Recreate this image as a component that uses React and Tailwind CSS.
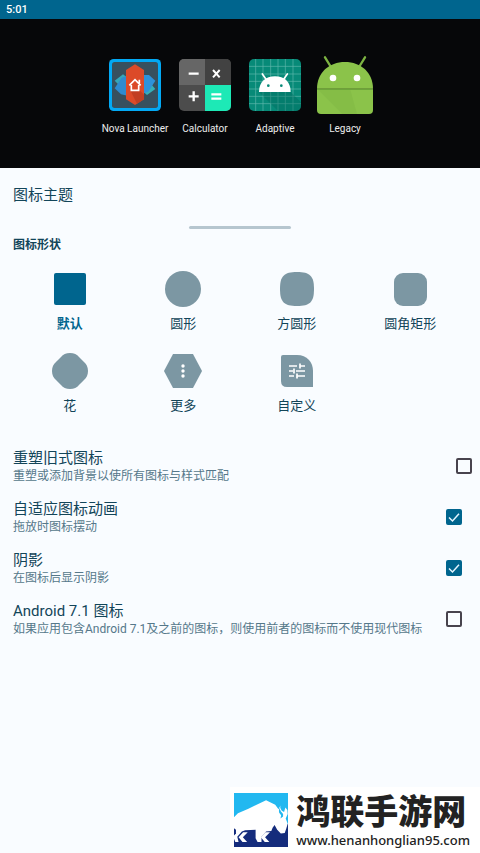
import { useState } from 'react'

const NovaIcon = () => (
  <svg viewBox="0 0 156 156" className="size-[52px]">
    <rect width="156" height="156" rx="14" fill="#03a9f4" />
    <rect x="9" y="9" width="138" height="138" rx="8" fill="#37505e" />
    <path d="M17 65 42 46 58 58 36 84Z" fill="#35a6b8" />
    <path d="M17 88 38 56 56 50V110L36 106Z" fill="#2e8bd0" />
    <path d="M139 90 114 108 100 96 120 68Z" fill="#35b0b8" />
    <path d="M139 65 118 98 100 104V48L120 48Z" fill="#2e92da" />
    <path d="M78 16 105 33V121L78 138 51 121V33Z" fill="#dc4a28" />
    <path d="M92 94 105 107V121L84 134 65 96Z" fill="#c23e22" />
    <path d="M61 79 78 62 95 79M91 62V73M67 78V94H89V78" fill="none" stroke="#fff" strokeWidth="5" />
  </svg>
)

const CalculatorIcon = () => (
  <svg viewBox="0 0 156 156" className="size-[52px] rounded-[5px]">
    <rect width="156" height="156" fill="#4c4c4c" />
    <rect width="78" height="78" fill="#666" />
    <rect x="78" width="78" height="78" fill="#424242" />
    <rect x="78" y="78" width="78" height="78" fill="#1de9b6" />
    <path d="M29 44H59M29 112H59M44 97V127" stroke="#fff" strokeWidth="7" />
    <path d="M102 33 122 55M122 33 102 55" stroke="#fff" strokeWidth="6" />
    <path d="M97 106H127M97 119H127" stroke="#fff" strokeWidth="7" />
  </svg>
)

const AdaptiveIcon = () => (
  <svg viewBox="0 0 156 156" className="size-[52px] rounded-[5px]">
    <rect width="156" height="156" fill="#078a78" />
    <path
      d="M20 0V156M42 0V156M65 0V156M87 0V156M109 0V156M132 0V156M0 22H156M0 45H156M0 67H156M0 90H156M0 112H156M0 134H156"
      stroke="#5fb8ac"
      strokeWidth="2"
    />
    <path d="M30 99H125L156 130V156H87Z" fill="#00695c" opacity=".4" />
    <path d="M30 99C30 69 50 52 78 52S125 69 125 99Z" fill="#fff" />
    <path d="M40 45 52 62M115 45 103 62" stroke="#fff" strokeWidth="5" strokeLinecap="round" />
    <circle cx="58" cy="80" r="4" fill="#078a78" />
    <circle cx="97" cy="80" r="4" fill="#078a78" />
  </svg>
)

const LegacyIcon = () => (
  <svg viewBox="0 0 168 174" className="h-[58px] w-14">
    <path d="M24 4 40 30M144 4 128 30" stroke="#7cb342" strokeWidth="7" strokeLinecap="round" />
    <path d="M0 98C0 50 36 18 84 18S168 50 168 98Z" fill="#8bc34a" />
    <path d="M0 98H168V162Q168 174 156 174H12Q0 174 0 162Z" fill="#8bc34a" />
    <path d="M4 102H100L120 174H76Z" fill="#78ae40" opacity=".3" />
    <path d="M0 100H168" stroke="#689f38" strokeWidth="3" />
    <circle cx="48" cy="66" r="10" fill="#fff" />
    <circle cx="120" cy="66" r="10" fill="#fff" />
  </svg>
)

const apps = [
  { name: 'Nova Launcher', Icon: NovaIcon },
  { name: 'Calculator', Icon: CalculatorIcon },
  { name: 'Adaptive', Icon: AdaptiveIcon },
  { name: 'Legacy', Icon: LegacyIcon },
]

const shapes = [
  { name: '默认', drawing: <rect x="4" y="4" width="32" height="32" rx="2" /> },
  { name: '圆形', drawing: <circle cx="20" cy="20" r="18" /> },
  {
    name: '方圆形',
    drawing: <path d="M20 3C33 3 37 7 37 20S33 37 20 37 3 33 3 20 7 3 20 3Z" />,
  },
  { name: '圆角矩形', drawing: <rect x="4" y="4" width="33" height="33" rx="9" /> },
  {
    name: '花',
    drawing: (
      <path d="M20 2C24 2 27 3.5 29 6Q31.5 8.500 34 11C36.5 13 38 16 38 20S36.5 27 34 29Q31.5 31.500 29 34C27 36.5 24 38 20 38S13 36.5 11 34Q8.500 31.500 6 29C3.500 27 2 24 2 20S3.500 13 6 11Q8.500 8.500 11 6C13 3.500 16 2 20 2Z" />
    ),
  },
  {
    name: '更多',
    drawing: (
      <>
        <path d="M10 3H30L39 20 30 37H10L1 20Z" />
        <g fill="#fff">
          <circle cx="20" cy="15" r="1.7" />
          <circle cx="20" cy="20" r="1.7" />
          <circle cx="20" cy="25" r="1.7" />
        </g>
      </>
    ),
  },
  {
    name: '自定义',
    drawing: (
      <>
        <path d="M6 4H20C30 4 36 11 36 20V36H10Q4 36 4 30V6Q4 4 6 4Z" />
        <path
          d="M12 15H20M23 15H28M23 12.5V17.5M12 20H16M19 20H28M17 17.5V22.5M12 25H17M20 25H28M20 22.5V27.5"
          stroke="#fff"
          strokeWidth="1.7"
        />
      </>
    ),
  },
]

const settings = [
  { id: 'reshape', title: '重塑旧式图标', text: '重塑或添加背景以使所有图标与样式匹配', on: false, pad: 'pr-2' },
  { id: 'animate', title: '自适应图标动画', text: '拖放时图标摆动', on: true, pad: 'pr-[18px]' },
  { id: 'shadow', title: '阴影', text: '在图标后显示阴影', on: true, pad: 'pr-[18px]' },
  {
    id: 'android71',
    title: 'Android 7.1 图标',
    text: '如果应用包含Android 7.1及之前的图标，则使用前者的图标而不使用现代图标',
    on: false,
    pad: 'pr-[18px]',
  },
]

const SettingRow = ({ item }) => {
  const [on, setOn] = useState(item.on)

  return (
    <label htmlFor={item.id} className={`flex items-center justify-between gap-2 pl-[13px] ${item.pad}`}>
      <span className="min-w-0">
        <span className="block text-[15px] leading-5 text-[#124559]">{item.title}</span>
        <span className="block text-xs leading-4 text-[#55788a]">{item.text}</span>
      </span>
      <span className="grid shrink-0 place-items-center">
        <input
          id={item.id}
          type="checkbox"
          checked={on}
          onChange={() => setOn(!on)}
          className="col-start-1 row-start-1 size-4 appearance-none rounded-[2px] border-2 border-[#48434d] checked:border-[#00658e] checked:bg-[#00658e]"
        />
        {on && (
          <svg viewBox="0 0 16 16" className="pointer-events-none col-start-1 row-start-1 size-4">
            <path d="M3 8.5 6.5 12 13 4.8" fill="none" stroke="#e4f5ff" strokeWidth="1.5" />
          </svg>
        )}
      </span>
    </label>
  )
}

const BullLogo = () => (
  <svg viewBox="0 0 165 165" className="size-[54px]">
    <rect width="165" height="165" fill="#22b8f0" />
    <path d="M0 95H165V165H0Z" fill="#152c7c" />
    <path
      d="M0 74 12 62 44 48 98 22 126 36 136 50 142 38Q140 46 146 54L153 58 157 44 163 52 164 64 158 78 164 94 160 108 155 122 143 124 132 112 124 98 118 106 114 116 98 118 84 134V150H72L66 138V112L34 114 24 118 10 134 14 150H4L0 140Z"
      fill="#fff"
    />
    <path d="M0 108 6 112V124L0 130Z" fill="#152c7c" />
    <path d="M42 120H28L14 135 26 150H40L27 135ZM110 120H96L82 135 94 150H108L95 135Z" fill="#fff" />
    <path d="M144 40Q138 48 143 56L150 64V72L142 78 144 68 138 60Q135 50 144 40Z" fill="#22b8f0" />
  </svg>
)

export default function App() {
  const [shape, setShape] = useState('默认')

  return (
    <div className="flex min-h-screen flex-col bg-[#f9fcff] font-['Roboto','Noto_Sans_CJK_SC',sans-serif] text-[#124559]">
      <header className="bg-[#00658e] pl-[6px] text-[11px] leading-[19px] font-medium text-white">5:01</header>

      {/* Preview */}
      <section className="flex h-[149px] justify-center bg-[#060709] pt-9">
        {apps.map(({ name, Icon }) => (
          <div key={name} className="flex w-[70px] flex-col items-center">
            <div className="flex h-[60px] items-center">
              <Icon />
            </div>
            <span className="mt-[6px] text-[10px] leading-4 whitespace-nowrap text-[#ededed]">{name}</span>
          </div>
        ))}
      </section>

      <main>
        <h1 className="px-[13px] pt-[17px] text-[15px] leading-5">图标主题</h1>
        <div className="mx-auto mt-[21px] h-[3px] w-[102px] rounded-full bg-[#b6c6cf]" />
        <h2 className="mt-2 px-[13px] text-xs leading-4 font-bold">图标形状</h2>

        {/* Shapes */}
        <div className="mt-4 grid grid-cols-4 gap-y-[17px] px-[13px]">
          {shapes.map(({ name, drawing }) => (
            <button
              key={name}
              type="button"
              aria-pressed={shape === name}
              onClick={() => setShape(name)}
              className={`flex flex-col items-center gap-[5px] ${shape === name ? 'font-bold text-[#00658e]' : ''}`}
            >
              <svg viewBox="0 0 40 40" className={`size-10 ${shape === name ? 'fill-[#00658e]' : 'fill-[#7c97a3]'}`}>
                {drawing}
              </svg>
              <span className="text-[13px] leading-5">{name}</span>
            </button>
          ))}
        </div>

        {/* Settings */}
        <div className="mt-8 flex flex-col gap-[15px]">
          {settings.map((item) => (
            <SettingRow key={item.id} item={item} />
          ))}
        </div>
      </main>

      <footer className="mt-auto flex items-center gap-2 self-end bg-white py-[5px] pr-[10px] pl-1 text-[#222]">
        <BullLogo />
        <div>
          <p className="font-['Noto_Sans_CJK_SC',sans-serif] text-[34px] leading-9 font-black">鸿联手游网</p>
          <p className="mt-1 font-['Noto_Sans',sans-serif] text-[13px] leading-4 font-medium">www.henanhonglian95.com</p>
        </div>
      </footer>
    </div>
  )
}
